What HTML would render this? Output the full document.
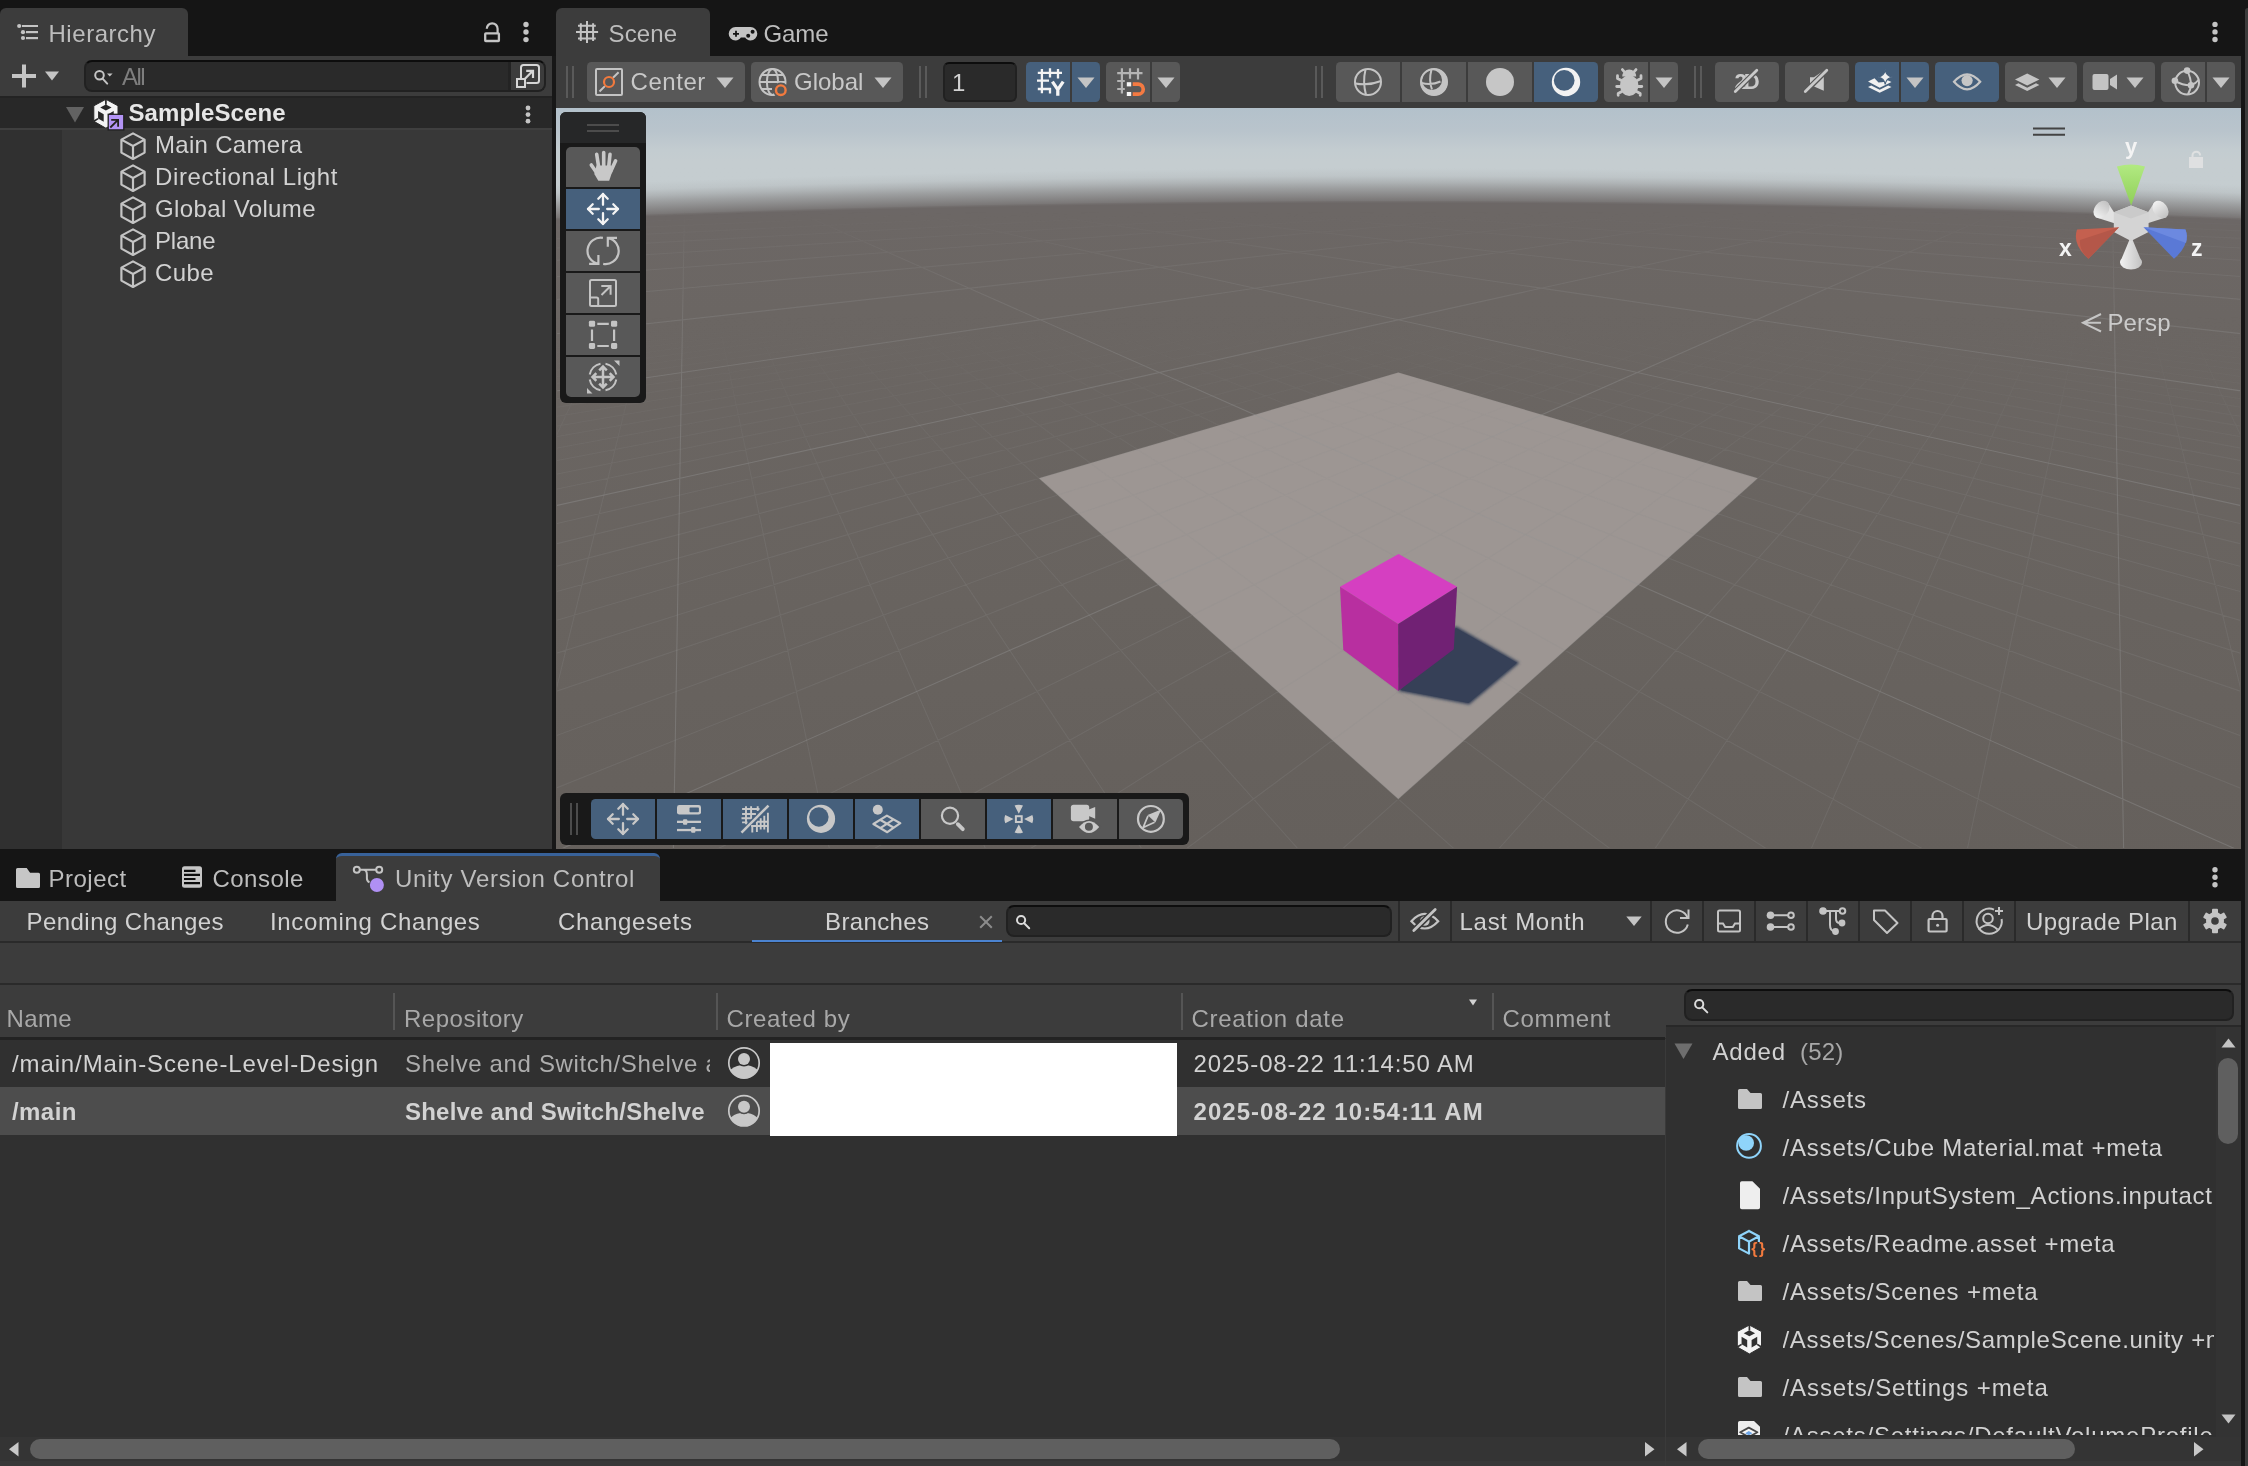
<!DOCTYPE html>
<html lang="en">
<head>
<meta charset="utf-8">
<title>Unity Editor - SampleScene</title>
<style>
*{box-sizing:border-box;margin:0;padding:0}
html,body{width:2248px;height:1466px;overflow:hidden;background:#151515}
body{position:relative;font-family:"Liberation Sans",sans-serif;font-size:24px;color:#d2d2d2;line-height:1}
.abs{position:absolute}
.t{position:absolute;white-space:nowrap;line-height:28px;height:28px}
.tab{position:absolute;background:#3c3c3c;border-radius:6px 6px 0 0}
.btn{position:absolute;background:#585858;border-radius:4.500px}
.on{background:#46607c}
.l{border-radius:4.500px 0 0 4.500px}.r{border-radius:0 4.500px 4.500px 0}.m{border-radius:0}
svg{display:block;position:absolute;overflow:visible}
.b{font-weight:bold}
.dim{color:#bdbdbd}
.search{position:absolute;background:#2a2a2a;border:2px solid #212121;border-top-color:#0d0d0d;border-radius:8px}
.hl{position:absolute;background:#232323}
.vsep{position:absolute;width:2px;background:#5a5a5a}
.uk{stroke:none}.ul{}
.vline{position:absolute;width:2px;background:#2a2a2a;top:901px;height:40px}
</style>
</head>
<body>
<div id="root" style="position:absolute;left:0;top:0;width:2248px;height:1466px;will-change:transform;overflow:hidden">
<!-- ================= HIERARCHY PANEL ================= -->
<div class="tab" style="left:0;top:8px;width:188px;height:48px"></div>
<svg style="left:16px;top:22px" width="24" height="20" viewBox="16 22 24 20" fill="#c4c4c4">
  <circle cx="19.2" cy="26" r="2.1"/><rect x="22" y="25" width="16" height="2"/>
  <circle cx="23" cy="32.2" r="2.1"/><rect x="26" y="31" width="12" height="2.2"/>
  <circle cx="23" cy="38" r="2.1"/><rect x="26" y="37" width="12" height="2.2"/>
</svg>
<div class="t dim" style="left:48.5px;top:20px;letter-spacing:0.54px" id="t-hier">Hierarchy</div>
<!-- lock + kebab -->
<svg style="left:482px;top:20px" width="20" height="24" viewBox="482 20 20 24" fill="none" stroke="#c4c4c4" stroke-width="2">
  <rect x="485.200" y="33.400" width="13.700" height="7.600" rx=".6" stroke-width="2.300"/>
  <path d="M486.800 28.700a5.400 5.400 0 0 1 10.800 0v4.600" stroke-width="2.200"/>
</svg>
<svg style="left:522px;top:20px" width="8" height="24" viewBox="522 20 8 24" fill="#c4c4c4">
  <circle cx="526" cy="24.500" r="2.700"/><circle cx="526" cy="32" r="2.700"/><circle cx="526" cy="39.600" r="2.700"/>
</svg>
<div class="abs" style="left:0;top:56px;width:552px;height:40px;background:#3c3c3c"></div>
<div class="abs" style="left:0;top:96px;width:552px;height:753px;background:#383838"></div>
<div class="abs" style="left:0;top:96px;width:62px;height:753px;background:#303030"></div>
<div class="abs" style="left:0;top:96px;width:552px;height:34px;background:#282828;border-top:2px solid #232323;border-bottom:2px solid #3f3f3f"></div>
<!-- plus + arrow -->
<svg style="left:10px;top:62px" width="52" height="28" viewBox="10 62 52 28" fill="#c4c4c4">
  <rect x="12" y="74" width="24" height="4"/><rect x="22" y="64.5" width="4" height="23"/>
  <path d="M45 71.5h14l-7 9z"/>
</svg>
<!-- search -->
<div class="search" style="left:84px;top:60px;width:462px;height:32px;overflow:hidden">
  <div class="abs" style="right:0;top:0;width:36px;height:28px;background:#3c3c3c;border-left:3.500px solid #232323"></div>
</div>
<svg style="left:92px;top:68px" width="22" height="18" viewBox="92 68 22 18" fill="none" stroke="#c4c4c4" stroke-width="2">
  <circle cx="99.5" cy="75.2" r="4.3"/><path d="M102.6 78.6l4.6 5" stroke-linecap="round"/>
  <path d="M107 73.4h5.6l-2.8 3.2z" fill="#c4c4c4" stroke="none"/>
</svg>
<div class="t" style="left:122px;top:63px;color:#7e7e7e;letter-spacing:-1.59px" id="t-all">All</div>
<svg style="left:514px;top:62px" width="28" height="28" viewBox="514 62 28 28" fill="none" stroke="#d6d6d6" stroke-width="2">
  <path d="M521 78.500V67.500a2.500 2.500 0 0 1 2.500-2.500h13a2.500 2.500 0 0 1 2.500 2.500v13a2.500 2.500 0 0 1-2.500 2.500H526.500"/><rect x="517" y="79" width="8" height="8"/><path d="M525 78.700L532.600 71M526.200 70.800H533V78" stroke-width="2.200"/>
</svg>
<!-- scene row -->
<svg style="left:64px;top:104px" width="22" height="20" viewBox="64 104 22 20"><path d="M66 107h18l-9 15.600z" fill="#626262"/></svg>
<svg style="left:92px;top:98px" width="34" height="34" viewBox="92 98 34 34">
  <defs><g id="unityLogo">
    <path d="M0 -14.450L12.100 -7.950V7.550L0 14.450L-12.100 7.550V-7.950z" fill="#f4f4f4"/>
    <path class="uk" d="M0 -9.150L5.700 -6.350L0 -3.250L-5.700 -6.350zM-7.830 -2.750L-2.200 .450V8.050L-7.830 4.850zM7.830 -2.750L2.200 .450V8.050L7.830 4.850z"/>
    <path class="ul" d="M0 -14.450V-9M-12.100 7.550L-7.800 4.900M12.100 7.550L7.800 4.900" fill="none" stroke-width="1.700"/>
  </g></defs>
  <g transform="translate(105.900 113.750)" style="fill:#282828;stroke:#282828"><use href="#unityLogo"/></g>
  <rect x="108.200" y="114.300" width="15.600" height="15.600" fill="#b394f5" stroke="#1f1f1f" stroke-width="1.300"/>
  <path d="M110.300 127.500l7.700-7.700M111.200 119.800h6.900v6.900" fill="none" stroke="#22221c" stroke-width="1.800"/>
</svg>
<div class="t b" style="left:128.5px;top:99px;color:#e6e6e6;letter-spacing:0.09px" id="t-ss">SampleScene</div>
<svg style="left:524px;top:104px" width="8" height="22" viewBox="524 104 8 22" fill="#c4c4c4">
  <circle cx="528" cy="108" r="2.4"/><circle cx="528" cy="114.6" r="2.4"/><circle cx="528" cy="121.2" r="2.4"/>
</svg>
<!-- game objects -->
<svg style="left:0;top:0" width="552" height="300" viewBox="0 0 552 300" fill="none" stroke="#c4c4c4" stroke-width="2.2" stroke-linejoin="round" id="cubes">
  <defs><path id="gocube" d="M133 -12.6l11.6 6.2v13l-11.6 6.4-11.6-6.4v-13zM121.4 -6.4l11.6 6.4 11.6-6.4M133 0v13"/></defs>
  <use href="#gocube" y="146"/><use href="#gocube" y="178"/><use href="#gocube" y="210"/><use href="#gocube" y="242"/><use href="#gocube" y="274"/>
</svg>
<div class="t" style="left:155px;top:131px;letter-spacing:.3px" id="t-h1">Main Camera</div>
<div class="t" style="left:155px;top:163px;letter-spacing:.65px" id="t-h2">Directional Light</div>
<div class="t" style="left:155px;top:195px;letter-spacing:0.37px" id="t-h3">Global Volume</div>
<div class="t" style="letter-spacing:-0.22px;left:155px;top:227px" id="t-h4">Plane</div>
<div class="t" style="left:155px;top:259px;letter-spacing:0.38px" id="t-h5">Cube</div>
<!-- ================= SCENE TABS + TOOLBAR ================= -->
<div class="abs" style="left:552px;top:56px;width:4px;height:793px;background:#171717"></div>
<div class="abs" style="left:2241px;top:0;width:4px;height:1466px;background:#151515"></div>
<div class="abs" style="left:2245px;top:8px;width:3px;height:1458px;background:#3c3c3c;border-radius:6px 0 0 0"></div>
<div class="tab" style="left:556px;top:8px;width:154px;height:48px"></div>
<svg style="left:575px;top:22px" width="24" height="22" viewBox="575 22 24 22" fill="none" stroke="#c4c4c4" stroke-width="2">
  <path d="M580.800 23.300V41M587 21V43M593.100 23.300V41M578 25.700H595.800M576 32H598.100M578 38.400H595.800"/>
</svg>
<div class="t dim" style="left:608.5px;top:20px;letter-spacing:.15px" id="t-scene">Scene</div>
<svg style="left:728px;top:25px" width="30" height="18" viewBox="728 25 30 18">
  <path d="M735.5 27h15a6.8 6.8 0 0 1 0 13.6c-2.6 0-4.2-1.4-5.3-3h-4.4c-1.1 1.600-2.700 3-5.300 3a6.800 6.800 0 0 1 0-13.600z" fill="#c4c4c4"/>
  <path d="M733 33.800h6M736 30.800v6" stroke="#151515" stroke-width="1.800" fill="none"/>
  <circle cx="748.200" cy="35.800" r="2" fill="#151515"/><circle cx="752.600" cy="31.800" r="2" fill="#151515"/>
</svg>
<div class="t dim" style="left:763.5px;top:20px;letter-spacing:-0.12px" id="t-game">Game</div>
<svg style="left:2211px;top:20px" width="8" height="24" viewBox="2211 20 8 24" fill="#c4c4c4">
  <circle cx="2215" cy="24.400" r="2.700"/><circle cx="2215" cy="31.900" r="2.700"/><circle cx="2215" cy="39.500" r="2.700"/>
</svg>
<div class="abs" style="left:556px;top:56px;width:1685px;height:52px;background:#3c3c3c"></div>
<!-- drag handles -->
<div class="vsep" style="left:566px;top:66px;height:32px"></div><div class="vsep" style="left:572px;top:66px;height:32px"></div>
<div class="vsep" style="left:919px;top:66px;height:32px"></div><div class="vsep" style="left:925px;top:66px;height:32px"></div>
<div class="vsep" style="left:1315px;top:66px;height:32px"></div><div class="vsep" style="left:1321px;top:66px;height:32px"></div>
<div class="vsep" style="left:1694px;top:66px;height:32px"></div><div class="vsep" style="left:1700px;top:66px;height:32px"></div>
<!-- Center -->
<div class="btn" style="left:587px;top:62px;width:158px;height:40px"></div>
<svg style="left:594px;top:67px" width="30" height="30" viewBox="594 67 30 30" fill="none" stroke-width="2">
  <rect x="596" y="69" width="26" height="26" rx="1" stroke="#c4c4c4"/>
  <path d="M599.500 91.500l5.400-5.400M613 77.800l5.600-5.600" stroke="#c4c4c4"/>
  <circle cx="609" cy="82" r="5" stroke="#f27a3e" stroke-width="2.200"/>
</svg>
<div class="t" style="left:630.5px;top:68px;color:#c8c8c8;letter-spacing:0.55px" id="t-center">Center</div>
<svg style="left:716px;top:77px" width="18" height="12" viewBox="0 0 18 12"><path d="M.5.500h17l-8.500 10.500z" fill="#c4c4c4"/></svg>
<!-- Global -->
<div class="btn" style="left:751px;top:62px;width:152px;height:40px"></div>
<svg style="left:757px;top:67px" width="32" height="32" viewBox="757 67 32 32" fill="none" stroke="#c4c4c4" stroke-width="2">
  <circle cx="772.500" cy="82" r="13"/><ellipse cx="772.500" cy="82" rx="5.600" ry="13"/><path d="M760 82h25M762 75h21M762 89h10"/>
  <circle cx="780.800" cy="90.200" r="7.800" fill="#585858" stroke="none"/><circle cx="780.800" cy="90.200" r="4.800" stroke="#f27a3e" stroke-width="2.400"/>
</svg>
<div class="t" style="left:794px;top:68px;color:#c8c8c8;letter-spacing:-0.01px" id="t-global">Global</div>
<svg style="left:874px;top:77px" width="18" height="12" viewBox="0 0 18 12"><path d="M.5.500h17l-8.500 10.500z" fill="#c4c4c4"/></svg>
<!-- input 1 -->
<div class="search" style="left:943px;top:62px;width:74px;height:40px;border-radius:6px"></div>
<div class="t" style="left:952px;top:69px;color:#d2d2d2" id="t-one">1</div>
<!-- grid btn -->
<div class="btn on l" style="left:1026px;top:62px;width:44px;height:40px"></div>
<div class="btn on r" style="left:1072px;top:62px;width:28px;height:40px"></div>
<svg style="left:1036px;top:67px" width="32" height="30" viewBox="1036 67 32 30" fill="none" stroke="#f4f4f4" stroke-width="2.300">
  <path d="M1041.900 69V93.200M1050 68.200V77.500M1058 69V78.400M1037.800 72.800H1062M1037 80.700H1049M1037.800 89H1051M1050 88V93.600"/>
  <path d="M1052.400 81.600L1057.800 89.600L1063.200 81.600M1057.800 89.600V95.800" stroke="#46607c" stroke-width="5"/>
  <path d="M1052.400 81.600L1057.800 89.600L1063.200 81.600M1057.800 89.600V95.800" stroke-width="3.300"/>
</svg>
<svg style="left:1077px;top:77px" width="18" height="12" viewBox="0 0 18 12"><path d="M.5.500h17l-8.500 10.500z" fill="#c4c4c4"/></svg>
<!-- snap btn -->
<div class="btn l" style="left:1106px;top:62px;width:44px;height:40px"></div>
<div class="btn r" style="left:1152px;top:62px;width:28px;height:40px"></div>
<svg style="left:1116px;top:67px" width="32" height="30" viewBox="1116 67 32 30" fill="none" stroke="#b4b4b4" stroke-width="2.200">
  <path d="M1121.900 68.200V93.500M1130 68.200V78.800M1138 68.200V79.500M1117.200 73.100H1142.500M1117.200 81H1124.800M1117.200 89H1124.800"/>
  <path d="M1132.700 84.100H1138.200A5.050 5.050 0 0 1 1138.200 94.200H1132.700" stroke="#f47a42" stroke-width="3.700"/>
  <rect x="1126.800" y="82.200" width="4.400" height="4.200" fill="#f4f4f4" stroke="none"/><rect x="1126.800" y="92" width="4.400" height="4" fill="#f4f4f4" stroke="none"/>
</svg>
<svg style="left:1157px;top:77px" width="18" height="12" viewBox="0 0 18 12"><path d="M.5.500h17l-8.500 10.500z" fill="#c4c4c4"/></svg>
<!-- draw mode group -->
<div class="btn l" style="left:1336px;top:62px;width:64px;height:40px"></div>
<div class="btn m" style="left:1402px;top:62px;width:64px;height:40px"></div>
<div class="btn m" style="left:1468px;top:62px;width:64px;height:40px"></div>
<div class="btn on r" style="left:1534px;top:62px;width:64px;height:40px"></div>
<svg style="left:1352px;top:66px" width="32" height="32" viewBox="1352 66 32 32" fill="none" stroke="#c4c4c4" stroke-width="2">
  <circle cx="1368" cy="82" r="13"/><path d="M1365.500 69.500q-3 12.500 .5 25.500M1355.500 83.500q13 2.500 25.500-2.500"/>
</svg>
<svg style="left:1418px;top:66px" width="32" height="32" viewBox="1418 66 32 32" fill="none" stroke="#c4c4c4" stroke-width="2">
  <defs><clipPath id="cpShade"><circle cx="1434" cy="82" r="13.5"/></clipPath></defs>
  <circle cx="1434" cy="82" r="13"/><path d="M1431.500 69.500q-3 11 .5 20M1421.500 83q10 2.500 19-1.500"/>
  <g clip-path="url(#cpShade)"><path fill-rule="evenodd" fill="#c4c4c4" stroke="none" d="M1418 66h32v32h-32zM1422 80a10 10 0 1 0 20 0a10 10 0 1 0-20 0z"/></g>
</svg>
<svg style="left:1484px;top:66px" width="32" height="32" viewBox="1484 66 32 32"><circle cx="1500" cy="82" r="14" fill="#c6c6c6"/></svg>
<svg style="left:1550px;top:66px" width="32" height="32" viewBox="1550 66 32 32">
  <circle cx="1566" cy="82" r="14.200" fill="#f2f2f2"/><circle cx="1564.200" cy="80.400" r="10.350" fill="#46607c"/>
</svg>
<!-- bug -->
<div class="btn l" style="left:1604px;top:62px;width:44px;height:40px"></div>
<div class="btn r" style="left:1650px;top:62px;width:28px;height:40px"></div>
<svg style="left:1613px;top:66px" width="32" height="32" viewBox="1613 66 32 32" fill="#c6c6c6" stroke="#c6c6c6" stroke-width="2.800" stroke-linecap="round" stroke-linejoin="round">
  <ellipse cx="1629.200" cy="85.600" rx="9.200" ry="10.400" stroke="none"/><path d="M1622.200 76.500a7 7 0 0 1 14 0z" stroke="none"/>
  <path d="M1624.600 72.200l-2.200-2.600M1633.800 72.200l2.200-2.600M1621.500 80.500l-4-2v-2.800M1637 80.500l4-2v-2.800M1620.500 86.500h-3.800M1638 86.500h3.800M1621.800 91.500l-3.600 2v1.800M1636.600 91.500l3.600 2v1.800" fill="none"/>
</svg>
<svg style="left:1655px;top:77px" width="18" height="12" viewBox="0 0 18 12"><path d="M.5.500h17l-8.500 10.500z" fill="#c4c4c4"/></svg>
<!-- 2D -->
<div class="btn" style="left:1715px;top:62px;width:64px;height:40px"></div>
<div class="t b" style="left:1734.500px;top:68px;font-size:22px;letter-spacing:-2.900px;color:#cacaca" id="t-2d">2D</div>
<svg style="left:1732px;top:66px" width="32" height="32" viewBox="1732 66 32 32"><path d="M1735.300 91.600L1756.800 70.300" stroke="#585858" stroke-width="5.200" stroke-linecap="round"/><path d="M1735.300 91.600L1756.800 70.300" stroke="#cacaca" stroke-width="2.800" stroke-linecap="round"/></svg>
<!-- audio -->
<div class="btn" style="left:1785px;top:62px;width:64px;height:40px"></div>
<svg style="left:1801px;top:66px" width="32" height="32" viewBox="1801 66 32 32">
  <path d="M1810 77.200h4l9.800-6.700v20.200l-9.800-4.200h-4z" fill="#cacaca"/>
  <path d="M1805.300 91.600L1826.800 70.300" stroke="#585858" stroke-width="5.400" stroke-linecap="round"/><path d="M1805.300 91.600L1826.800 70.300" stroke="#cacaca" stroke-width="2.800" stroke-linecap="round"/>
</svg>
<!-- fx -->
<div class="btn on l" style="left:1855px;top:62px;width:44px;height:40px"></div>
<div class="btn on r" style="left:1901px;top:62px;width:28px;height:40px"></div>
<svg style="left:1865px;top:66px" width="32" height="32" viewBox="1865 66 32 32" fill="#f0f0f0">
  <path d="M1868 81.500l6.500-3.200 4 4.200 5.500-.5 2.500-2.200 5 2.200-11.800 5.800z"/>
  <path d="M1868 87l3.200-1.500 8.500 4.200 8.500-4.200 3.300 1.500-11.800 5.800z"/>
  <path d="M1885.200 69.600q.9 6.200 7.200 7.400q-6.300 1.200-7.200 7.400q-.900-6.200-7.200-7.400q6.300-1.200 7.200-7.400z" stroke="#46607c" stroke-width="1.200"/>
</svg>
<svg style="left:1906px;top:77px" width="18" height="12" viewBox="0 0 18 12"><path d="M.5.500h17l-8.500 10.500z" fill="#c4c4c4"/></svg>
<!-- eye -->
<div class="btn on" style="left:1935px;top:62px;width:64px;height:40px"></div>
<svg style="left:1951px;top:70px" width="32" height="24" viewBox="1951 70 32 24">
  <path d="M1954 81.800q13.100-15 26.200 0q-13.100 15-26.200 0z" fill="none" stroke="#c6c6c6" stroke-width="2.200"/><circle cx="1967.100" cy="80.600" r="5.600" fill="#c6c6c6"/>
</svg>
<!-- layers -->
<div class="btn" style="left:2005px;top:62px;width:72px;height:40px"></div>
<svg style="left:2013px;top:70px" width="28" height="24" viewBox="2013 70 28 24" fill="#c4c4c4">
  <path d="M2015 79.500l12.200-6 12.200 6-12.200 6z"/><path d="M2015 85l3.400-1.700 8.800 4.400 8.800-4.400 3.400 1.700-12.200 6z"/>
</svg>
<svg style="left:2048px;top:77px" width="18" height="12" viewBox="0 0 18 12"><path d="M.5.500h17l-8.500 10.500z" fill="#c4c4c4"/></svg>
<!-- camera -->
<div class="btn" style="left:2083px;top:62px;width:72px;height:40px"></div>
<svg style="left:2091px;top:72px" width="28" height="20" viewBox="2091 72 28 20" fill="#c4c4c4">
  <rect x="2092.500" y="74" width="16" height="16" rx="2"/><path d="M2110 79l7-4.500v15l-7-4.500z"/>
</svg>
<svg style="left:2126px;top:77px" width="18" height="12" viewBox="0 0 18 12"><path d="M.5.500h17l-8.500 10.500z" fill="#c4c4c4"/></svg>
<!-- gizmos -->
<div class="btn l" style="left:2161px;top:62px;width:44px;height:40px"></div>
<div class="btn r" style="left:2207px;top:62px;width:28px;height:40px"></div>
<svg style="left:2170px;top:66px" width="32" height="32" viewBox="2170 66 32 32" fill="none" stroke="#c6c6c6" stroke-width="2">
  <circle cx="2187.100" cy="82.600" r="11.900"/><path d="M2187.100 70.600Q2191 78 2191 85.200Q2190.500 90 2188 94.300M2174.900 80.800Q2183 85.500 2191 85.200Q2196 83.500 2199 79.500"/>
  <circle cx="2187.100" cy="70.600" r="3.300" fill="#c6c6c6" stroke="none"/><circle cx="2174.900" cy="80.800" r="3.300" fill="#c6c6c6" stroke="none"/><circle cx="2191" cy="85.200" r="3.300" fill="#c6c6c6" stroke="none"/>
</svg>
<svg style="left:2212px;top:77px" width="18" height="12" viewBox="0 0 18 12"><path d="M.5.500h17l-8.500 10.500z" fill="#c4c4c4"/></svg>
<!-- ================= SCENE VIEWPORT ================= -->
<div class="abs" style="left:556px;top:108px;width:1685px;height:741px;overflow:hidden;background:#65605c">
<svg style="left:0;top:0" width="1685" height="741" viewBox="556 108 1685 741">
  <defs>
    <linearGradient id="skyL" gradientUnits="userSpaceOnUse" x1="0" y1="108" x2="0" y2="848">
      <stop offset="0" stop-color="#b3c1cb"/>
      <stop offset="0.0311" stop-color="#b9c4cc"/>
      <stop offset="0.0568" stop-color="#c3ccd0"/>
      <stop offset="0.0716" stop-color="#c5cdd0"/>
      <stop offset="1" stop-color="#c3cbcd"/>
    </linearGradient>
    <radialGradient id="sky" gradientUnits="userSpaceOnUse" cx="1398" cy="21033" r="21000">
      <stop offset="0.96119" stop-color="#65605c"/>
      <stop offset="0.97300" stop-color="#68635f"/>
      <stop offset="0.98729" stop-color="#6b6663"/>
      <stop offset="0.99150" stop-color="#6c6765"/>
      <stop offset="0.99190" stop-color="#6c6766"/>
      <stop offset="0.99198" stop-color="#6c6766" stop-opacity=".92"/>
      <stop offset="0.99202" stop-color="#6c6766" stop-opacity=".84"/>
      <stop offset="0.99217" stop-color="#6c6766" stop-opacity=".74"/>
      <stop offset="0.99231" stop-color="#6c6766" stop-opacity=".65"/>
      <stop offset="0.99262" stop-color="#6c6766" stop-opacity=".45"/>
      <stop offset="0.99290" stop-color="#6c6766" stop-opacity=".25"/>
      <stop offset="0.99319" stop-color="#6c6766" stop-opacity=".08"/>
      <stop offset="0.99357" stop-color="#6c6766" stop-opacity="0"/>
    </radialGradient>
    <linearGradient id="fadeMinor" gradientUnits="userSpaceOnUse" x1="0" y1="108" x2="0" y2="848">
      <stop offset="0.28" stop-color="#fff" stop-opacity="0"/>
      <stop offset="0.40" stop-color="#fff" stop-opacity=".5"/>
      <stop offset="0.55" stop-color="#fff" stop-opacity="1"/>
      <stop offset="1" stop-color="#fff" stop-opacity="1"/>
    </linearGradient>
    <linearGradient id="fadeMajor" gradientUnits="userSpaceOnUse" x1="0" y1="108" x2="0" y2="848">
      <stop offset="0.14" stop-color="#fff" stop-opacity="0"/>
      <stop offset="0.19" stop-color="#fff" stop-opacity=".32"/>
      <stop offset="0.28" stop-color="#fff" stop-opacity=".7"/>
      <stop offset="0.40" stop-color="#fff" stop-opacity="1"/>
      <stop offset="1" stop-color="#fff" stop-opacity="1"/>
    </linearGradient>
    <mask id="mMinor" maskUnits="userSpaceOnUse" x="557" y="108" width="1683" height="740"><rect x="557" y="108" width="1683" height="740" fill="url(#fadeMinor)"/></mask>
    <mask id="mMajor" maskUnits="userSpaceOnUse" x="557" y="108" width="1683" height="740"><rect x="557" y="108" width="1683" height="740" fill="url(#fadeMajor)"/></mask>
    <filter id="blur2" x="-20%" y="-20%" width="140%" height="140%"><feGaussianBlur stdDeviation="1.6"/></filter>
    <linearGradient id="gGreen" x1="0" y1="0" x2="0" y2="1"><stop offset="0" stop-color="#b2ea82"/><stop offset="1" stop-color="#8fce58"/></linearGradient>
    <linearGradient id="gGray" x1="0" y1="0" x2="1" y2="0"><stop offset="0" stop-color="#f2f2f2"/><stop offset="1" stop-color="#c2c2c2"/></linearGradient>
  </defs>
  <rect x="556" y="108" width="1685" height="741" fill="url(#skyL)"/>
  <rect x="556" y="108" width="1685" height="741" fill="url(#sky)"/>
  <!-- plane -->
  <path d="M1398.300 372.500L1757.700 478.300L1398.300 799L1039 478.300z" fill="#9d9693"/>
  <!-- grid -->
  <g mask="url(#mMinor)"><path d="M552.0 179.8L556.1 179.3M2245.0 179.6L2241.1 179.1M552.0 180.3L560.2 179.3M2245.0 180.1L2236.9 179.1M552.0 180.9L564.3 179.2M2245.0 180.7L2232.8 179.0M552.0 181.5L568.4 179.2M2245.0 181.3L2228.8 179.0M552.0 182.8L576.5 179.1M2245.0 182.6L2220.6 178.9M552.0 183.5L580.5 179.0M2245.0 183.3L2216.6 178.8M552.0 184.3L584.5 179.0M2245.0 184.0L2212.6 178.8M552.0 185.1L588.5 178.9M2245.0 184.9L2208.6 178.8M552.0 186.0L592.4 178.9M2245.0 185.8L2204.7 178.7M552.0 187.0L596.4 178.9M2245.0 186.7L2200.7 178.7M552.0 188.0L600.3 178.8M2245.0 187.8L2196.8 178.6M552.0 189.2L604.2 178.8M2245.0 188.9L2192.9 178.6M552.0 190.4L608.0 178.7M2245.0 190.2L2189.0 178.5M552.0 193.3L615.7 178.6M2245.0 193.1L2181.3 178.5M552.0 195.0L619.6 178.6M2245.0 194.8L2177.5 178.4M552.0 196.9L623.3 178.6M2245.0 196.7L2173.7 178.4M552.0 199.1L627.1 178.5M2245.0 198.8L2169.9 178.3M552.0 201.5L630.9 178.5M2245.0 201.3L2166.2 178.3M552.0 204.3L634.6 178.4M2245.0 204.0L2162.4 178.3M552.0 207.4L638.3 178.4M2245.0 207.2L2158.7 178.2M552.0 211.1L642.0 178.4M2245.0 210.9L2155.0 178.2M552.0 215.5L645.7 178.3M2245.0 215.3L2151.3 178.2M552.0 227.2L653.0 178.2M2245.0 226.9L2144.0 178.1M552.0 235.2L656.7 178.2M2245.0 234.9L2140.4 178.0M552.0 245.4L660.3 178.2M2245.0 245.2L2136.7 178.0M552.0 259.0L663.9 178.1M2245.0 258.8L2133.2 178.0M552.0 278.0L667.4 178.1M2245.0 277.8L2129.6 177.9M552.0 306.3L671.0 178.1M2245.0 306.1L2126.0 177.9M552.0 353.1L674.5 178.0M2245.0 352.8L2122.5 177.8M552.0 444.8L678.1 178.0M2245.0 444.4L2118.9 177.8M552.0 706.8L681.6 177.9M2245.0 706.3L2115.4 177.8M830.3 853.0L688.5 177.9M1966.5 853.0L2108.5 177.7M987.4 853.0L692.0 177.8M1809.3 853.0L2105.0 177.7M1144.6 853.0L695.4 177.8M1652.1 853.0L2101.6 177.6M1301.7 853.0L698.8 177.7M1495.0 853.0L2098.1 177.6M1458.8 853.0L702.2 177.7M1337.8 853.0L2094.7 177.6M1615.9 853.0L705.6 177.7M1180.6 853.0L2091.4 177.5M1773.1 853.0L709.0 177.6M1023.5 853.0L2088.0 177.5M1930.2 853.0L712.3 177.6M866.3 853.0L2084.6 177.4M2087.4 853.0L715.7 177.6M709.2 853.0L2081.3 177.4M2245.0 790.0L722.3 177.5M552.0 789.8L2074.6 177.3M2245.0 737.3L725.6 177.5M552.0 737.2L2071.3 177.3M2245.0 692.8L728.9 177.4M552.0 692.7L2068.1 177.3M2245.0 654.7L732.1 177.4M552.0 654.7L2064.8 177.2M2245.0 621.8L735.4 177.4M552.0 621.7L2061.5 177.2M2245.0 592.9L738.6 177.3M552.0 592.9L2058.3 177.2M2245.0 567.5L741.8 177.3M552.0 567.4L2055.1 177.1M2245.0 544.9L745.0 177.2M552.0 544.9L2051.9 177.1M2245.0 524.7L748.2 177.2M552.0 524.7L2048.7 177.1M2245.0 490.0L754.5 177.1M552.0 490.1L2042.4 177.0M2245.0 475.1L757.7 177.1M552.0 475.1L2039.2 177.0M2245.0 461.4L760.8 177.1M552.0 461.5L2036.1 176.9M2245.0 448.9L763.9 177.0M552.0 449.0L2033.0 176.9M2245.0 437.5L767.0 177.0M552.0 437.5L2029.9 176.9M2245.0 426.8L770.1 177.0M552.0 426.9L2026.8 176.8M2245.0 417.0L773.2 176.9M552.0 417.1L2023.7 176.8M2245.0 407.9L776.2 176.9M552.0 408.0L2020.7 176.8M2245.0 399.4L779.3 176.9M552.0 399.5L2017.6 176.7M2245.0 384.1L785.3 176.8M552.0 384.2L2011.6 176.7M2245.0 377.1L788.3 176.8M552.0 377.2L2008.6 176.6M2245.0 370.6L791.3 176.7M552.0 370.7L2005.6 176.6M2245.0 364.5L794.3 176.7M552.0 364.6L2002.6 176.6M2245.0 358.7L797.2 176.7M552.0 358.8L1999.6 176.5M2245.0 353.2L800.2 176.7M552.0 353.3L1996.7 176.5M2245.0 348.1L803.1 176.6M552.0 348.2L1993.8 176.5M2245.0 343.2L806.0 176.6M552.0 343.3L1990.8 176.4M2245.0 338.5L808.9 176.6M552.0 338.6L1987.9 176.4M2245.0 329.9L814.7 176.5M552.0 330.0L1982.1 176.4M2245.0 325.9L817.6 176.5M552.0 326.0L1979.3 176.3M2245.0 322.1L820.4 176.4M552.0 322.2L1976.4 176.3M2245.0 318.5L823.3 176.4M552.0 318.6L1973.6 176.3M2245.0 315.0L826.1 176.4M552.0 315.1L1970.7 176.2M2245.0 311.7L828.9 176.3M552.0 311.8L1967.9 176.2M2245.0 308.5L831.7 176.3M552.0 308.6L1965.1 176.2M2245.0 305.5L834.5 176.3M552.0 305.6L1962.3 176.1M2245.0 302.5L837.3 176.2M552.0 302.7L1959.5 176.1M2245.0 297.0L842.8 176.2M552.0 297.2L1954.0 176.1M2245.0 294.4L845.6 176.2M552.0 294.6L1951.2 176.0M2245.0 291.9L848.3 176.1M552.0 292.1L1948.5 176.0M2245.0 289.5L851.1 176.1M552.0 289.7L1945.8 176.0M2245.0 287.2L853.8 176.1M552.0 287.4L1943.1 175.9" stroke="#8e8e8e" stroke-opacity=".21" stroke-width="1.100" fill="none"/></g>
  <g mask="url(#mMajor)"><path d="M552.0 182.1L572.4 179.1M2245.0 181.9L2224.7 178.9M552.0 191.8L611.9 178.7M2245.0 191.6L2185.2 178.5M552.0 220.8L649.4 178.3M2245.0 220.5L2147.6 178.1M673.3 853.0L685.0 177.9M2123.7 853.0L2111.9 177.7M2244.6 853.0L719.0 177.5M552.0 853.0L2077.9 177.4M2245.0 506.5L751.4 177.2M552.0 506.5L2045.5 177.0M2245.0 391.5L782.3 176.8M552.0 391.6L2014.6 176.7M2245.0 334.1L811.8 176.5M552.0 334.2L1985.0 176.4M2245.0 299.7L840.1 176.2M552.0 299.9L1956.7 176.1M2245.0 276.8L867.1 175.9M552.0 277.0L1929.7 175.8M2245.0 260.5L893.1 175.6M552.0 260.6L1903.7 175.5M2245.0 248.2L917.9 175.4M552.0 248.3L1878.8 175.3M2245.0 238.6L941.8 175.1M552.0 238.8L1855.0 175.0M2245.0 231.0L964.7 174.9M552.0 231.2L1832.0 174.8M2245.0 224.8L986.8 174.6M552.0 225.0L1809.9 174.5M2245.0 219.6L1008.0 174.4M552.0 219.8L1788.7 174.3M2245.0 215.2L1028.4 174.2M552.0 215.4L1768.3 174.1M2245.0 211.4L1048.1 174.0M552.0 211.6L1748.6 173.9M2245.0 208.1L1067.1 173.8M552.0 208.3L1729.6 173.7M2245.0 205.3L1085.5 173.6M552.0 205.5L1711.2 173.5M2245.0 202.8L1103.1 173.4M552.0 202.9L1693.5 173.3M2245.0 200.5L1120.2 173.2M552.0 200.7L1676.4 173.1M2245.0 198.5L1136.8 173.0M552.0 198.7L1659.9 172.9M2245.0 196.7L1152.7 172.8M552.0 196.9L1643.9 172.8M2245.0 195.1L1168.2 172.7M552.0 195.3L1628.4 172.6M2245.0 193.6L1183.2 172.5M552.0 193.8L1613.5 172.4M2245.0 192.2L1197.7 172.3M552.0 192.4L1598.9 172.3M2245.0 191.0L1211.7 172.2M552.0 191.2L1584.9 172.1M2245.0 189.8L1225.4 172.0M552.0 190.0L1571.2 172.0M2245.0 188.8L1238.6 171.9M552.0 189.0L1558.0 171.9M2245.0 187.8L1251.4 171.8M552.0 188.0L1545.2 171.7M2245.0 186.9L1263.9 171.6M552.0 187.1L1532.7 171.6M2245.0 186.1L1276.0 171.5M552.0 186.3L1520.6 171.5M2245.0 185.3L1287.8 171.4M552.0 185.5L1508.8 171.3M2245.0 184.5L1299.2 171.2M552.0 184.7L1497.4 171.2M2245.0 183.8L1310.4 171.1M552.0 184.0L1486.2 171.1M2245.0 183.2L1321.2 171.0M552.0 183.4L1475.4 171.0M2245.0 182.6L1331.7 170.9M552.0 182.8L1464.9 170.9M2245.0 182.0L1342.0 170.8M552.0 182.2L1454.6 170.8M2245.0 181.5L1352.0 170.7M552.0 181.7L1444.6 170.7M2245.0 181.0L1361.7 170.6M552.0 181.1L1434.9 170.6M2245.0 180.5L1371.2 170.5M552.0 180.7L1425.4 170.5M2245.0 180.0L1380.5 170.4M552.0 180.2L1416.1 170.4M2245.0 179.6L1389.5 170.3M552.0 179.8L1407.1 170.3M2245.0 179.1L1398.3 170.2M552.0 179.3L1398.3 170.2" stroke="#949494" stroke-opacity=".4" stroke-width="1.100" fill="none"/></g>
  <!-- shadow -->
  <path d="M1398.300 691L1469.200 704.500L1519.500 662.800L1455.700 626L1440 640z" fill="#364057" filter="url(#blur2)"/>
  <path d="M1400 690L1468.500 703L1517 662.800L1456 628z" fill="#364057"/>
  <!-- cube -->
  <path d="M1398.600 554.100L1457.100 586.700L1398.100 624.100L1340 586.700z" fill="#d53fc1"/>
  <path d="M1340 586.700L1398.100 624.100L1398.300 691L1343.300 649.900z" fill="#b82fa0"/>
  <path d="M1398.100 624.100L1457.100 586.700L1453.800 649.300L1398.300 691z" fill="#712174"/>
  <!-- gizmo handle -->
  <path d="M2033 128.600h32M2033 134.800h32" stroke="#434343" stroke-width="2"/>
  <!-- orientation gizmo -->
  <g>
    <path d="M2123 226L2107.500 202.200L2095.500 217.200z" fill="#e2e2e2"/><ellipse cx="2101.500" cy="209.500" rx="9.600" ry="7" transform="rotate(-52 2101.500 209.500)" fill="url(#gGray)"/>
    <path d="M2139 226L2154.500 202.200L2166.500 217.200z" fill="#d6d6d6"/><ellipse cx="2160.500" cy="209.500" rx="9.600" ry="7" transform="rotate(52 2160.500 209.500)" fill="url(#gGray)"/>
    <path d="M2131.200 205.400L2116.900 166.500Q2131 162.500 2145 166.500z" fill="url(#gGreen)"/>
    <path d="M2131 236L2120 262.500L2142 262.500z" fill="url(#gGray)"/><ellipse cx="2131" cy="262.500" rx="11" ry="7" fill="url(#gGray)"/>
    <path d="M2131 205.500L2148.600 212.300L2148.600 232L2131 241L2113.800 232L2113.800 212.300z" fill="#d4d4d4"/>
    <path d="M2131 205.500L2148.600 212.300L2131 218.500L2113.800 212.300z" fill="#cacaca"/>
    <path d="M2119 227.300L2077 229.500Q2072 245 2088.500 258.800z" fill="#c4604f"/>
    <path d="M2119 227.300L2088.500 258.800Q2079 250 2080 240z" fill="#b45749"/>
    <path d="M2143.500 227.300L2185.500 229.500Q2190.500 245 2174 258.800z" fill="#5a79d6"/>
    <path d="M2143.500 227.300L2185.500 229.500Q2188 236 2186 243z" fill="#6c89e0"/>
  </g>
  <text x="2125" y="154.200" font-family="Liberation Sans, sans-serif" font-weight="bold" font-size="22" fill="#f4f4f4">y</text>
  <text x="2059" y="255.500" font-family="Liberation Sans, sans-serif" font-weight="bold" font-size="23" fill="#f4f4f4">x</text>
  <text x="2191" y="255.500" font-family="Liberation Sans, sans-serif" font-weight="bold" font-size="23" fill="#f4f4f4">z</text>
  <!-- gizmo lock -->
  <g fill="none" stroke="#e4e4e4" stroke-width="2" opacity=".85"><rect x="2190" y="158" width="12" height="9" fill="#e4e4e4"/><path d="M2192.500 158v-2.500a3.800 3.800 0 0 1 7.600 0"/></g>
  <!-- persp -->
  <path d="M2101 314L2083 322.800L2101 331.500M2083 322.800H2101" stroke="#cfcfcf" stroke-width="2" fill="none" opacity=".9"/>
  <text x="2107.500" y="330.800" font-family="Liberation Sans, sans-serif" font-size="24" fill="#d4d4d4" opacity=".92" letter-spacing="0.07" id="t-persp">Persp</text>
</svg>
</div>
<!-- ================= SCENE OVERLAYS ================= -->
<!-- tools panel -->
<div class="abs" style="left:560px;top:112px;width:86px;height:291px;background:#191919;border-radius:6px"></div>
<div class="abs" style="left:560px;top:112px;width:86px;height:31px;background:#262728;border-radius:6px 6px 0 0"></div>
<div class="abs" style="left:587px;top:124px;width:32px;height:2px;background:#4c4c4c"></div>
<div class="abs" style="left:587px;top:130px;width:32px;height:2px;background:#4c4c4c"></div>
<div class="btn" style="left:566px;top:147px;width:74px;height:40px;border-radius:5px 5px 0 0"></div>
<div class="btn on m" style="left:566px;top:189px;width:74px;height:40px"></div>
<div class="btn m" style="left:566px;top:231px;width:74px;height:40px"></div>
<div class="btn m" style="left:566px;top:273px;width:74px;height:40px"></div>
<div class="btn m" style="left:566px;top:315px;width:74px;height:40px"></div>
<div class="btn" style="left:566px;top:357px;width:74px;height:40px;border-radius:0 0 5px 5px"></div>
<!-- hand -->
<svg style="left:587px;top:148px" width="34" height="36" viewBox="587 148 34 36" fill="#c8c8c8" stroke="#c8c8c8" stroke-width="3.600" stroke-linecap="round">
  <path d="M591.300 164.900L597.500 174M596.700 154.200L598.800 168M603.700 152.500V168M610 154.400L608.600 168M615.600 160.800L610.500 172" fill="none"/>
  <path d="M596.500 165.500H611.500L612.300 171.500L609.200 180.800H598.300L594.300 174z" stroke="none"/>
</svg>
<!-- move -->
<svg style="left:587px;top:193px" width="32" height="32" viewBox="587 193 32 32" fill="none" stroke="#f4f4f4" stroke-width="2.300" stroke-linecap="round" stroke-linejoin="round">
  <path d="M603 204.800V194M603 213.200V224M598.800 209H588M607.200 209H618"/>
  <path d="M598.300 198.700L603 194L607.700 198.700M598.300 219.300L603 224L607.700 219.300M592.700 204.300L588 209L592.700 213.700M613.300 204.300L618 209L613.300 213.700"/>
</svg>
<!-- rotate -->
<svg style="left:587px;top:235px" width="32" height="32" viewBox="587 235 32 32" fill="none" stroke="#c4c4c4" stroke-width="2">
  <path d="M602.900 237.900A12.900 12.900 0 0 0 598.400 263.800M589.100 263.800H598.400V255M603.200 263.900A12.900 12.900 0 0 0 607.800 237.900M617 237.900H607.800V246.800" stroke-width="2.200"/>
</svg>
<!-- scale -->
<svg style="left:587px;top:277px" width="32" height="32" viewBox="587 277 32 32" fill="none" stroke="#c4c4c4" stroke-width="2">
  <rect x="590" y="280" width="26" height="26" rx="1.500"/><path d="M590 297.500h6.500a1.700 1.700 0 0 1 1.700 1.700v6.800"/><path d="M601.500 295L610.600 286M601.300 286H610.600V294.800"/>
</svg>
<!-- rect -->
<svg style="left:587px;top:319px" width="32" height="32" viewBox="587 319 32 32" fill="#c4c4c4" stroke="#c4c4c4" stroke-width="2">
  <path d="M597.300 323.800h11.500M597.300 346h11.500M592 329.400v11.500M614.100 329.400v11.500" fill="none" stroke-width="2.200"/>
  <rect x="588.900" y="320.800" width="6.200" height="6" rx="1.400" stroke="none"/><rect x="611" y="320.800" width="6.200" height="6" rx="1.400" stroke="none"/>
  <rect x="588.900" y="343" width="6.200" height="6" rx="1.400" stroke="none"/><rect x="611" y="343" width="6.200" height="6" rx="1.400" stroke="none"/>
</svg>
<!-- transform -->
<svg style="left:585px;top:359px" width="36" height="36" viewBox="585 360 36 36" fill="none" stroke="#c4c4c4" stroke-width="2">
  <path d="M600.500 364.700a13.500 13.500 0 0 0-10.800 10.800M605.500 364.700a13.500 13.500 0 0 1 10.800 10.800M616.300 380.500a13.500 13.500 0 0 1-10.800 10.800M600.500 391.300a13.500 13.500 0 0 1-10.800-10.800"/>
  <path d="M603 367.500v21M592.500 378h21M599.200 371.300l3.800-3.800 3.800 3.800M599.200 384.700l3.800 3.800 3.800-3.800M596.300 374.200l-3.800 3.800 3.800 3.800M609.700 374.200l3.800 3.800-3.800 3.800" stroke-width="2.500"/>
  <path d="M614 361.500h5.500v5.500zM587 394.500v-5.500l5.500 5.500z" fill="#c4c4c4" stroke="none"/>
</svg>

<!-- bottom overlay toolbar -->
<div class="abs" style="left:560px;top:793px;width:629px;height:52px;background:#191919;border-radius:6px"></div>
<div class="abs" style="left:570px;top:803px;width:2px;height:32px;background:#4c4c4c"></div>
<div class="abs" style="left:576px;top:803px;width:2px;height:32px;background:#4c4c4c"></div>
<div class="btn on l" style="left:591px;top:799px;width:64px;height:40px"></div>
<div class="btn on m" style="left:657px;top:799px;width:64px;height:40px"></div>
<div class="btn on m" style="left:723px;top:799px;width:64px;height:40px"></div>
<div class="btn on m" style="left:789px;top:799px;width:64px;height:40px"></div>
<div class="btn on m" style="left:855px;top:799px;width:64px;height:40px"></div>
<div class="btn m" style="left:921px;top:799px;width:64px;height:40px"></div>
<div class="btn on m" style="left:987px;top:799px;width:64px;height:40px"></div>
<div class="btn m" style="left:1053px;top:799px;width:64px;height:40px"></div>
<div class="btn r" style="left:1119px;top:799px;width:64px;height:40px"></div>
<!-- 1 move -->
<svg style="left:607px;top:803px" width="32" height="32" viewBox="587 193 32 32" fill="none" stroke="#c8c8c8" stroke-width="2.300" stroke-linecap="round" stroke-linejoin="round">
  <path d="M603 204.800V194M603 213.200V224M598.800 209H588M607.200 209H618"/>
  <path d="M598.300 198.700L603 194L607.700 198.700M598.300 219.300L603 224L607.700 219.300M592.700 204.300L588 209L592.700 213.700M613.300 204.300L618 209L613.300 213.700"/>
</svg>
<!-- 2 sliders -->
<svg style="left:673px;top:803px" width="32" height="32" viewBox="673 803 32 32" fill="#c8c8c8">
  <rect x="677" y="805" width="24" height="9.600" rx="2.400"/><rect x="689.500" y="807.600" width="9.400" height="4.600" rx=".8" fill="#46607c"/>
  <rect x="677" y="820.700" width="24" height="2.300"/><rect x="683" y="819.300" width="4.300" height="5.400" rx="1"/>
  <rect x="677" y="828.900" width="24" height="2.300"/><rect x="691.100" y="827.100" width="4.300" height="5.600" rx="1"/>
</svg>
<!-- 3 grid slash -->
<svg style="left:739px;top:803px" width="32" height="32" viewBox="739 803 32 32" fill="none" stroke="#c8c8c8" stroke-width="1.900">
  <path d="M746 806.200V824.200M751.100 806.200V818.800M757.700 806.200V811M742.100 809H759.500M742.100 814H755.900M741.500 818.200H751.100M742.100 822.400H747.500"/>
  <path d="M741.500 832.600L768.500 805.600" stroke-width="2.500"/>
  <path d="M752.300 826.600V832.600M756.900 821.800V832M760.700 818.200V829.600M764.300 815.800V829.600M767.900 812.800V832.600M757.100 821.800H768.500M751.100 826H768.500"/>
</svg>
<!-- 4 shading -->
<svg style="left:805px;top:803px" width="32" height="32" viewBox="805 803 32 32">
  <circle cx="821" cy="818.800" r="14.100" fill="#c8c8c8"/><circle cx="818.900" cy="817" r="9.700" fill="#46607c"/>
</svg>
<!-- 5 light grid -->
<svg style="left:871px;top:803px" width="32" height="32" viewBox="871 803 32 32" fill="none" stroke="#c8c8c8" stroke-width="2.200" stroke-linejoin="round">
  <circle cx="877.800" cy="809.800" r="5" fill="#c8c8c8" stroke="none"/>
  <path d="M873.400 824L886.900 815.600L900.300 823.200L887.300 832.200zM880.100 819.800L893.800 827.700M893.600 819.400L880.300 828.100"/>
</svg>
<!-- 6 search -->
<svg style="left:937px;top:803px" width="32" height="32" viewBox="937 803 32 32" fill="none" stroke="#c8c8c8" stroke-width="2.200">
  <circle cx="950" cy="815.800" r="8.100"/><path d="M957.800 824.200L962.800 829.200" stroke-width="3.800" stroke-linecap="round"/>
</svg>
<!-- 7 pivot -->
<svg style="left:1003px;top:803px" width="32" height="32" viewBox="1003 803 32 32" fill="#cacaca">
  <rect x="1015.900" y="816.200" width="5.800" height="5.800" fill="none" stroke="#cacaca" stroke-width="2"/>
  <path d="M1018.800 813.800L1014.600 805.600Q1018.800 803.800 1023 805.600zM1018.800 824.400L1014.600 832.400Q1018.800 834.200 1023 832.400zM1013.500 819.100L1005.300 814.900Q1003.500 819.100 1005.300 823.300zM1024.100 819.100L1032.300 814.900Q1034.100 819.100 1032.300 823.300z"/>
</svg>
<!-- 8 camera eye -->
<svg style="left:1069px;top:803px" width="32" height="32" viewBox="1069 803 32 32" fill="#c8c8c8">
  <rect x="1070.900" y="804.700" width="18.300" height="16.500" rx="2.600"/><path d="M1088.800 809.600L1095.200 806.900V818.700L1088.800 816z"/>
  <path d="M1079 826.900Q1089 814.900 1099.200 826.900Q1089 838.900 1079 826.900z" fill="none" stroke="#585858" stroke-width="3"/>
  <path d="M1079 826.900Q1089 814.900 1099.200 826.900Q1089 838.900 1079 826.900z"/>
  <circle cx="1088.900" cy="826.800" r="4" fill="#585858"/>
</svg>
<!-- 9 compass -->
<svg style="left:1135px;top:803px" width="32" height="32" viewBox="1135 803 32 32" fill="none" stroke="#c8c8c8" stroke-width="2.200">
  <circle cx="1150.900" cy="818.900" r="12.900"/>
  <path d="M1161.200 809.400L1147.600 815.100L1155.400 822.400z" fill="#c8c8c8" stroke="none"/>
  <path d="M1148 815.800L1143.200 827.400L1154.600 822.200" stroke-width="1.700" stroke-linejoin="round"/>
</svg>
<!-- ================= BOTTOM PANEL ================= -->
<div class="abs" style="left:0;top:849px;width:2241px;height:52px;background:#151515"></div>
<div class="tab" style="left:336px;top:853px;width:324px;height:48px;border-top:3.600px solid #38629a"></div>
<svg style="left:14px;top:866px" width="28" height="24" viewBox="14 866 28 24"><path d="M16 869.500a1.500 1.500 0 0 1 1.500-1.500h9.200l3.400 4.700h8.400a1.500 1.500 0 0 1 1.500 1.500v12.300a1.500 1.500 0 0 1-1.500 1.500h-21a1.500 1.500 0 0 1-1.500-1.500z" fill="#c6c6c6"/></svg>
<div class="t dim" style="left:48.500px;top:865px;letter-spacing:0.50px" id="t-proj">Project</div>
<svg style="left:180px;top:865px" width="24" height="24" viewBox="180 865 24 24"><rect x="182" y="866.200" width="20" height="21.600" rx="2.500" fill="#c6c6c6"/><path d="M184 870.800h11.500M184 874.900h16M184 879h11.500M184 883.100h16" stroke="#0c0c0c" stroke-width="2.200"/></svg>
<div class="t dim" style="left:212.500px;top:865px;letter-spacing:0.47px" id="t-cons">Console</div>
<svg style="left:351px;top:863px" width="36" height="32" viewBox="351 863 36 32" fill="none" stroke="#c4c4c4" stroke-width="2">
  <circle cx="356.800" cy="869.800" r="3"/><circle cx="379.200" cy="869.800" r="3"/><path d="M359.800 869.800h16.400M363.500 869.800q3.400 0 3.400 5v3.500q0 3 2.600 4"/>
  <circle cx="376.900" cy="885" r="7" fill="#b090f4" stroke="none"/>
</svg>
<div class="t dim" style="left:395px;top:865px;letter-spacing:0.70px" id="t-uvc">Unity Version Control</div>
<svg style="left:2211px;top:865px" width="8" height="24" viewBox="2211 865 8 24" fill="#c4c4c4">
  <circle cx="2215" cy="869.800" r="2.700"/><circle cx="2215" cy="877.300" r="2.700"/><circle cx="2215" cy="884.800" r="2.700"/>
</svg>
<!-- toolbar area -->
<div class="abs" style="left:0;top:901px;width:2241px;height:137px;background:#3c3c3c"></div>
<div class="abs" style="left:0;top:941px;width:2241px;height:2px;background:#2a2a2a"></div>
<div class="abs" style="left:0;top:983px;width:2241px;height:2px;background:#2a2a2a"></div>
<div class="t" style="left:26.500px;top:908px;letter-spacing:0.45px" id="t-pend">Pending Changes</div>
<div class="t" style="left:270px;top:908px;letter-spacing:.65px" id="t-inc">Incoming Changes</div>
<div class="t" style="left:558px;top:908px;letter-spacing:.65px" id="t-chg">Changesets</div>
<div class="t" style="left:825px;top:908px;letter-spacing:0.37px" id="t-br">Branches</div>
<div class="abs" style="left:752px;top:939.500px;width:250px;height:2.500px;background:#4b83d0"></div>
<svg style="left:978px;top:914px" width="16" height="16" viewBox="978 914 16 16"><path d="M980.200 916.200l11.600 11.600M991.800 916.200l-11.600 11.600" stroke="#8c8c8c" stroke-width="2"/></svg>
<div class="search" style="left:1006px;top:905px;width:386px;height:32px"></div>
<svg style="left:1014px;top:912px" width="18" height="18" viewBox="1014 912 18 18" fill="none" stroke="#dcdcdc" stroke-width="2"><circle cx="1021.100" cy="920" r="4.100"/><path d="M1024.200 923.200l5 5" stroke-linecap="round"/></svg>
<!-- toolbar separators -->
<div class="vline" style="left:1398px"></div><div class="vline" style="left:1450px"></div><div class="vline" style="left:1650px"></div>
<div class="vline" style="left:1702px"></div><div class="vline" style="left:1754px"></div><div class="vline" style="left:1806px"></div>
<div class="vline" style="left:1858px"></div><div class="vline" style="left:1910px"></div><div class="vline" style="left:1962px"></div>
<div class="vline" style="left:2014px"></div><div class="vline" style="left:2188px"></div>
<!-- eye slash -->
<svg style="left:1408px;top:906px" width="34" height="28" viewBox="1408 906 34 28" fill="none" stroke="#c4c4c4" stroke-width="2.200">
  <path d="M1411.400 921.200q13.300-14.600 26.800 0q-13.500 14.600-26.800 0z"/><circle cx="1424.800" cy="921" r="4.800" fill="#c4c4c4" stroke="none"/>
  <path d="M1413.800 930.600L1435.200 909.400" stroke="#3c3c3c" stroke-width="6"/><path d="M1413.800 930.600L1435.200 909.400" stroke-width="2.800" stroke-linecap="round"/>
</svg>
<div class="t" style="left:1459.500px;top:908px;letter-spacing:0.72px" id="t-lm">Last Month</div>
<svg style="left:1626px;top:916px" width="16" height="11" viewBox="0 0 16 11"><path d="M.300.500h15.400l-7.700 9.500z" fill="#c4c4c4"/></svg>
<!-- refresh -->
<svg style="left:1662px;top:906px" width="30" height="30" viewBox="1662 906 30 30" fill="none" stroke="#c4c4c4" stroke-width="2">
  <path d="M1687.600 918a11.200 11.200 0 1 0 .2 6.500"/><path d="M1688.500 909.500v8.500h-8.500"/>
</svg>
<!-- inbox -->
<svg style="left:1715px;top:907px" width="28" height="28" viewBox="1715 907 28 28" fill="none" stroke="#c4c4c4" stroke-width="2">
  <rect x="1718" y="910.500" width="22" height="21" rx="1.500"/><path d="M1718 923.500h5l2.200 3.500h7.600l2.200-3.500h5"/>
</svg>
<!-- branches icon -->
<svg style="left:1764px;top:908px" width="34" height="26" viewBox="1764 908 34 26" fill="none" stroke="#c4c4c4" stroke-width="2">
  <circle cx="1770.500" cy="915.200" r="3.800" fill="#c4c4c4" stroke="none"/><circle cx="1770.500" cy="927" r="3.800" fill="#c4c4c4" stroke="none"/>
  <circle cx="1791" cy="915.200" r="2.800"/><circle cx="1791" cy="927" r="2.800"/><path d="M1773 915.200h15M1773 927h15"/>
</svg>
<!-- merge icon -->
<svg style="left:1816px;top:904px" width="34" height="34" viewBox="1816 904 34 34" fill="none" stroke="#c4c4c4" stroke-width="2">
  <circle cx="1823" cy="911" r="3.800" fill="#c4c4c4" stroke="none"/><circle cx="1842.500" cy="911" r="2.800"/>
  <circle cx="1842" cy="923" r="3.400" fill="#c4c4c4" stroke="none"/><circle cx="1835.500" cy="931.500" r="3.400" fill="#c4c4c4" stroke="none"/>
  <path d="M1826 911h14M1830 911v14q0 6 5 6.500M1836 911v8q0 4 4 4"/>
</svg>
<!-- tag -->
<svg style="left:1870px;top:906px" width="32" height="30" viewBox="1870 906 32 30" fill="none" stroke="#c4c4c4" stroke-width="2" stroke-linejoin="round">
  <path d="M1874 910.500h11l12.500 12.500-10.500 10-13-13z"/>
</svg>
<!-- lock -->
<svg style="left:1924px;top:907px" width="28" height="28" viewBox="1924 907 28 28" fill="none" stroke="#c4c4c4" stroke-width="2.200">
  <rect x="1928.600" y="919" width="18" height="12.500" rx="1"/><path d="M1932.500 919v-3a5 5 0 0 1 10 0v3"/><circle cx="1937.600" cy="925.200" r="1.500" fill="#c4c4c4" stroke="none"/>
</svg>
<!-- user plus -->
<svg style="left:1972px;top:905px" width="34" height="32" viewBox="1972 905 34 32" fill="none" stroke="#c4c4c4" stroke-width="2">
  <path d="M1994 909.600a12.600 12.600 0 1 0 7.600 9.400"/><circle cx="1988" cy="918.500" r="4.800"/><path d="M1978.500 929.500q9.500-9 19 0"/>
  <path d="M1999 907v8M1995 911h8"/>
</svg>
<div class="t" style="left:2026px;top:908px;letter-spacing:0.42px" id="t-up">Upgrade Plan</div>
<!-- gear -->
<svg style="left:2201px;top:907px" width="28" height="28" viewBox="-14 -14 28 28">
  <g fill="#c4c4c4"><circle r="9"/>
  <rect x="-3" y="-12.200" width="6" height="24.400" rx="1"/><rect x="-3" y="-12.200" width="6" height="24.400" rx="1" transform="rotate(60)"/><rect x="-3" y="-12.200" width="6" height="24.400" rx="1" transform="rotate(120)"/></g>
  <circle r="3.800" fill="#3c3c3c"/>
</svg>
<!-- ============ TABLE ============ -->
<div class="abs" style="left:0;top:1038px;width:2241px;height:428px;background:#303030"></div>
<div class="abs" style="left:0;top:1037px;width:1665px;height:2.500px;background:#232323"></div>
<div class="t" style="left:6.500px;top:1005px;color:#a8a8a8;letter-spacing:0.36px" id="t-name">Name</div>
<div class="t" style="left:404px;top:1005px;color:#a8a8a8;letter-spacing:0.51px" id="t-repo">Repository</div>
<div class="t" style="left:726.500px;top:1005px;color:#a8a8a8;letter-spacing:0.64px" id="t-cby">Created by</div>
<div class="t" style="left:1191.500px;top:1005px;color:#a8a8a8;letter-spacing:0.70px" id="t-cdate">Creation date</div>
<div class="t" style="left:1502.500px;top:1005px;color:#a8a8a8;letter-spacing:0.66px" id="t-comm">Comment</div>
<div class="abs" style="left:393px;top:993px;width:2px;height:37px;background:#555"></div>
<div class="abs" style="left:716px;top:993px;width:2px;height:37px;background:#555"></div>
<div class="abs" style="left:1181px;top:993px;width:2px;height:37px;background:#555"></div>
<div class="abs" style="left:1492px;top:993px;width:2px;height:37px;background:#555"></div>
<svg style="left:1469px;top:999px" width="8" height="7" viewBox="0 0 8 7"><path d="M0 .500h8l-4 6z" fill="#d2d2d2"/></svg>
<!-- rows -->
<div class="abs" style="left:0;top:1087px;width:1665px;height:48px;background:#4d4d4d"></div>
<div class="t" style="left:12px;top:1050px;letter-spacing:0.88px" id="t-r1a">/main/Main-Scene-Level-Design</div>
<div class="t" style="left:405px;top:1050px;color:#adadad;letter-spacing:0.65px;width:305px;overflow:hidden" id="t-r1b">Shelve and Switch/Shelve and Switch</div>
<div class="t b" style="left:12px;top:1098px;letter-spacing:0.43px" id="t-r2a">/main</div>
<div class="t b" style="left:405px;top:1098px;letter-spacing:0.21px;width:305px;overflow:hidden" id="t-r2b">Shelve and Switch/Shelve and Switch</div>
<svg style="left:726px;top:1045px" width="36" height="84" viewBox="726 1045 36 84">
  <defs><clipPath id="avc"><circle cx="744" cy="0" r="15.200"/></clipPath>
  <mask id="avm" maskUnits="userSpaceOnUse" x="726" y="-18" width="36" height="36"><rect x="726" y="-18" width="36" height="36" fill="#fff"/><circle cx="744" cy="-4" r="7.500" fill="#000"/></mask>
  <g id="avatar"><circle cx="744" cy="0" r="15.200" fill="none" stroke="#c8c8c8" stroke-width="1.700"/>
    <g clip-path="url(#avc)"><g mask="url(#avm)"><ellipse cx="744" cy="16" rx="17.750" ry="14" fill="#c8c8c8"/></g></g>
    <circle cx="744" cy="-4" r="6" fill="#c8c8c8"/></g></defs>
  <use href="#avatar" y="1063"/><use href="#avatar" y="1110.800"/>
</svg>
<div class="abs" style="left:770px;top:1043px;width:407px;height:92.500px;background:#fff"></div>
<div class="t" style="left:1193.500px;top:1050px;letter-spacing:0.85px" id="t-d1">2025-08-22 11:14:50 AM</div>
<div class="t b" style="left:1193.500px;top:1098px;letter-spacing:1.04px" id="t-d2">2025-08-22 10:54:11 AM</div>
<!-- main h-scroll -->
<div class="abs" style="left:0;top:1437px;width:1665px;height:24px;background:#343434"></div><div class="abs" style="left:0;top:1461px;width:2241px;height:5px;background:#383838"></div>
<svg style="left:8px;top:1440px" width="12" height="18" viewBox="0 0 12 18"><path d="M10.500 2v14.500l-9.500-7.250z" fill="#c8c8c8"/></svg>
<div class="abs" style="left:30px;top:1439px;width:1310px;height:20px;background:#5f5f5f;border-radius:10px"></div>
<svg style="left:1644px;top:1440px" width="12" height="18" viewBox="0 0 12 18"><path d="M1 2v14.500l9.500-7.250z" fill="#c8c8c8"/></svg>
<!-- ============ RIGHT TREE PANEL ============ -->
<div class="abs" style="left:1665px;top:1039px;width:1px;height:427px;background:#3a3a3a"></div>
<div class="abs" style="left:1666px;top:985px;width:575px;height:41px;background:#3c3c3c"></div>
<div class="abs" style="left:1666px;top:1025px;width:575px;height:2px;background:#282828"></div>
<div class="search" style="left:1684px;top:989px;width:550px;height:32px"></div>
<svg style="left:1692px;top:997px" width="18" height="18" viewBox="1692 997 18 18" fill="none" stroke="#dcdcdc" stroke-width="2"><circle cx="1699.200" cy="1004.200" r="4.100"/><path d="M1702.300 1007.400l5 5" stroke-linecap="round"/></svg>
<div class="abs" style="left:1666px;top:1027px;width:550px;height:408px;overflow:hidden;background:#303030">
  <svg style="left:8px;top:16px" width="20" height="17" viewBox="0 0 20 17"><path d="M.500.500h18l-9 15.500z" fill="#6e6e6e"/></svg>
  <div class="t" style="left:46.500px;top:11px;letter-spacing:0.77px" id="t-added">Added</div>
  <div class="t" style="left:134px;top:11px;color:#a8a8a8;letter-spacing:0.20px" id="t-52">(52)</div>
  <div class="t" style="left:116.500px;top:59px;letter-spacing:0.82px" id="t-a1">/Assets</div>
  <div class="t" style="left:116.500px;top:107px;letter-spacing:0.80px" id="t-a2">/Assets/Cube Material.mat +meta</div>
  <div class="t" style="left:116.500px;top:155px;letter-spacing:0.80px;width:431px;overflow:hidden" id="t-a3">/Assets/InputSystem_Actions.inputactions +meta</div>
  <div class="t" style="left:116.500px;top:203px;letter-spacing:0.72px" id="t-a4">/Assets/Readme.asset +meta</div>
  <div class="t" style="left:116.500px;top:251px;letter-spacing:0.82px" id="t-a5">/Assets/Scenes +meta</div>
  <div class="t" style="left:116.500px;top:299px;letter-spacing:0.70px;width:431px;overflow:hidden" id="t-a6">/Assets/Scenes/SampleScene.unity +meta</div>
  <div class="t" style="left:116.500px;top:347px;letter-spacing:0.91px" id="t-a7">/Assets/Settings +meta</div>
  <div class="t" style="left:116.500px;top:395px;letter-spacing:0.76px;width:431px;overflow:hidden" id="t-a8">/Assets/Settings/DefaultVolumeProfile.asset +meta</div>
  <!-- icons -->
  <svg style="left:70px;top:58px" width="28" height="380" viewBox="1736 1085 28 380">
    <defs><path id="fold" d="M1738 1a1.500 1.500 0 0 1 1.500-1.500h7.500l3.500 4h10a1.500 1.500 0 0 1 1.500 1.500v13a1.500 1.500 0 0 1-1.500 1.500h-21a1.500 1.500 0 0 1-1.500-1.500z" fill="#c4c4c4"/></defs>
    <use href="#fold" y="1089.500"/><use href="#fold" y="1281.500"/><use href="#fold" y="1377.500"/>
    <circle cx="1749" cy="1145.900" r="11.900" fill="none" stroke="#8fd4fa" stroke-width="2"/><circle cx="1746.200" cy="1143" r="7.800" fill="#8fd4fa"/>
    <path d="M1741.800 1181.200h10.600l7.600 7.600v18.600a1.800 1.800 0 0 1-1.800 1.800h-16.400a1.800 1.800 0 0 1-1.800-1.800v-24.400a1.800 1.800 0 0 1 1.800-1.800z" fill="#eeeeee"/>
    <g fill="none" stroke="#8fd4fa" stroke-width="2.200" stroke-linejoin="round" stroke-linecap="round"><path d="M1749 1231l-9.900 5.200v12.200l9.900 5.200M1749 1231l9.900 5.200v6M1739.100 1236.200l9.900 5.400 9.900-5.400M1749 1241.600v11.600"/></g>
    <rect x="1751" y="1242" width="16" height="16" fill="#303030"/><text x="1751.300" y="1254" font-family="Liberation Sans, sans-serif" font-weight="bold" font-size="16" letter-spacing="1.400" fill="#f27a3e">{}</text>
    <g transform="translate(1749.400 1339.500)" style="fill:#303030;stroke:#303030"><use href="#unityLogo"/></g>
    <g><path d="M1739.800 1421h14.200l6 5.800v12.200h-22v-16.200a1.800 1.800 0 0 1 1.800-1.800z" fill="#eeeeee"/>
      <path d="M1748.800 1427.600L1757.400 1432.300L1748.800 1437L1740.200 1432.300z" fill="#f6f6f6" stroke="#484848" stroke-width="1.800" stroke-linejoin="round"/>
      <path d="M1748.800 1431L1752.400 1433.200L1748.800 1435.400L1745.200 1433.200z" fill="#6ea6e8"/></g>
  </svg>
</div>
<!-- v-scroll -->
<div class="abs" style="left:2216px;top:1027px;width:25px;height:410px;background:#333333"></div>
<svg style="left:2221px;top:1038px" width="15" height="10" viewBox="0 0 15 10"><path d="M.500 9.500h14l-7-9z" fill="#c4c4c4"/></svg>
<div class="abs" style="left:2218px;top:1058px;width:20px;height:86px;background:#5f5f5f;border-radius:10px"></div>
<svg style="left:2221px;top:1414px" width="15" height="10" viewBox="0 0 15 10"><path d="M.500.500h14l-7 9z" fill="#c4c4c4"/></svg>
<!-- right h-scroll -->
<div class="abs" style="left:1666px;top:1437px;width:575px;height:24px;background:#343434"></div>
<svg style="left:1676px;top:1440px" width="12" height="18" viewBox="0 0 12 18"><path d="M10.500 2v14.500l-9.500-7.250z" fill="#c8c8c8"/></svg>
<div class="abs" style="left:1698px;top:1439px;width:377px;height:20px;background:#5f5f5f;border-radius:10px"></div>
<svg style="left:2193px;top:1440px" width="12" height="18" viewBox="0 0 12 18"><path d="M1 2v14.500l9.500-7.250z" fill="#c8c8c8"/></svg>
</div>
</body>
</html>
